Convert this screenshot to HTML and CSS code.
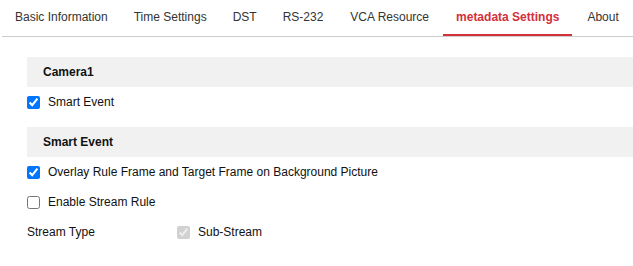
FILE: index.html
```html
<!DOCTYPE html>
<html>
<head>
<meta charset="utf-8">
<link rel="stylesheet" href="styles.css">
</head>
<body>
<nav class="tabs">
  <span class="tab">Basic Information</span>
  <span class="tab">Time Settings</span>
  <span class="tab">DST</span>
  <span class="tab">RS-232</span>
  <span class="tab">VCA Resource</span>
  <span class="tab active">metadata Settings</span>
  <span class="tab">About</span>
</nav>
<main class="content">
  <div class="section-title">Camera1</div>
  <label class="row"><input type="checkbox" checked><span>Smart Event</span></label>
  <div class="section-title gap">Smart Event</div>
  <label class="row"><input type="checkbox" checked><span>Overlay Rule Frame and Target Frame on Background Picture</span></label>
  <label class="row"><input type="checkbox"><span>Enable Stream Rule</span></label>
  <div class="row">
    <span class="field-label">Stream Type</span>
    <label class="inline"><input type="checkbox" checked disabled><span>Sub-Stream</span></label>
  </div>
</main>
</body>
</html>
```
FILE: styles.css
```css
html, body {
  margin: 0;
  padding: 0;
  background: #fff;
  font-family: "Liberation Sans", Arial, sans-serif;
  font-size: 12px;
  color: #222;
}
.tabs {
  display: flex;
  margin-left: 2px;
  border-bottom: 1px solid #cccccc;
  height: 36px;
}
.tab {
  padding: 0 13px;
  height: 34px;
  line-height: 34px;
  color: #333;
  border-bottom: 2px solid transparent;
  white-space: nowrap;
}
.tab:nth-child(5) {
  padding-left: 14px;
}
.tab.active {
  color: #d3303a;
  font-weight: bold;
  border-bottom-color: #d3303a;
  margin-left: 1px;
  margin-right: 2px;
}
.content {
  padding-left: 27px;
  padding-top: 20px;
}
.section-title {
  height: 30px;
  line-height: 30px;
  background: #f1f1f1;
  padding-left: 16px;
  font-weight: bold;
  color: #111;
}
.section-title.gap {
  margin-top: 10px;
}
.row {
  display: flex;
  align-items: center;
  height: 30px;
  color: #111;
}
.row input, .inline input {
  width: 13px;
  height: 13px;
  margin: 0 8px 0 0;
}
.field-label {
  width: 150px;
}
.inline {
  display: flex;
  align-items: center;
}
```
